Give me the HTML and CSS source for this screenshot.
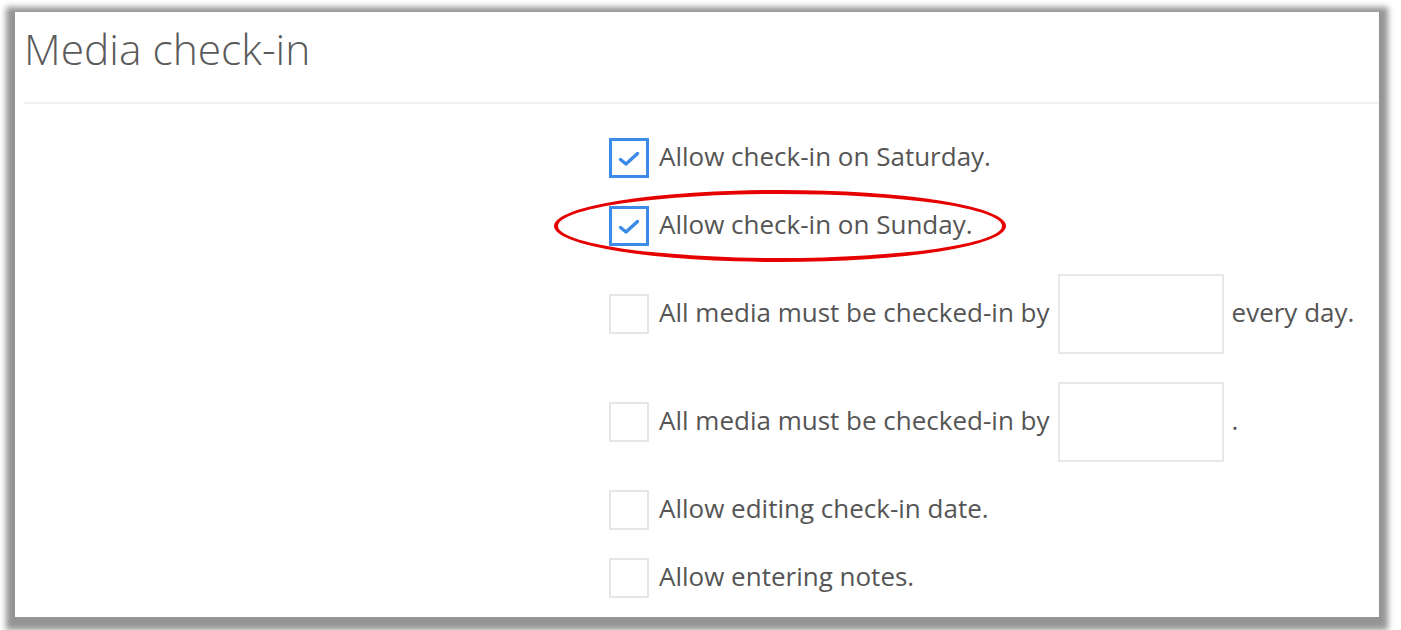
FILE: index.html
```html
<!DOCTYPE html>
<html>
<head>
<meta charset="utf-8">
<link rel="stylesheet" href="styles.css">
</head>
<body>
<div class="page">
  <div class="panel">
    <h1 class="title">Media check-in</h1>
    <div class="rule"></div>
    <div class="form">
      <div class="row">
        <span class="box checked"><svg viewBox="0 0 24 24" width="24" height="24"><path d="M3.5 12.5 L9 17 L20.5 6.5" fill="none" stroke="#3d8be8" stroke-width="3.4" stroke-linecap="round" stroke-linejoin="round"/></svg></span>
        <span class="label">Allow check-in on Saturday.</span>
      </div>
      <div class="row">
        <span class="box checked"><svg viewBox="0 0 24 24" width="24" height="24"><path d="M3.5 12.5 L9 17 L20.5 6.5" fill="none" stroke="#3d8be8" stroke-width="3.4" stroke-linecap="round" stroke-linejoin="round"/></svg></span>
        <span class="label">Allow check-in on Sunday.</span>
        <span class="ellipse"></span>
      </div>
      <div class="row tall">
        <span class="box"></span>
        <span class="label">All media must be checked-in by</span>
        <span class="input"></span>
        <span class="label">every day.</span>
      </div>
      <div class="row tall">
        <span class="box"></span>
        <span class="label">All media must be checked-in by</span>
        <span class="input"></span>
        <span class="label">.</span>
      </div>
      <div class="row">
        <span class="box"></span>
        <span class="label">Allow editing check-in date.</span>
      </div>
      <div class="row">
        <span class="box"></span>
        <span class="label">Allow entering notes.</span>
      </div>
    </div>
  </div>
</div>
</body>
</html>
```

FILE: styles.css
```css
html, body {
  margin: 0;
  padding: 0;
  background: #ffffff;
}
.page {
  padding: 12px 22px 0 15px;
  height: 630px;
  box-sizing: border-box;
  overflow: hidden;
}
.panel {
  background: #ffffff;
  height: 605px;
  box-shadow: 0 4px 6px 9px rgba(0, 0, 0, 0.42);
  font-family: "Open Sans", "Liberation Sans", sans-serif;
  color: #555555;
}
.title {
  margin: 0;
  padding: 10px 0 0 9px;
  height: 76px;
  box-sizing: border-box;
  font-size: 42.5px;
  font-weight: 300;
  line-height: 54px;
  color: #5a5a5a;
}
.rule {
  margin: 14px 0 0 9px;
  height: 2px;
  background: #f0f0f0;
}
.form {
  display: flex;
  flex-direction: column;
  gap: 28px;
  padding: 34px 0 0 594px;
}
.row {
  position: relative;
  display: flex;
  align-items: center;
  gap: 10px;
  height: 40px;
}
.row.tall {
  height: 80px;
}
.box {
  width: 40px;
  height: 40px;
  box-sizing: border-box;
  border: 2px solid #e6e6e6;
  display: flex;
  align-items: center;
  justify-content: center;
  flex: none;
}
.box.checked {
  border: 3px solid #3d8be8;
}
.box.checked svg {
  margin-top: 1px;
}
.label {
  font-size: 26px;
  line-height: 34px;
  margin-bottom: 4px;
  color: #555555;
}
.input {
  width: 166px;
  height: 80px;
  box-sizing: border-box;
  border: 2px solid #e8e8e8;
  flex: none;
  margin-left: -2px;
  margin-right: -2px;
}
.ellipse {
  position: absolute;
  left: -55px;
  top: -16px;
  width: 452px;
  height: 72px;
  box-sizing: border-box;
  border: 4px solid #e60000;
  border-radius: 50%;
}
```
